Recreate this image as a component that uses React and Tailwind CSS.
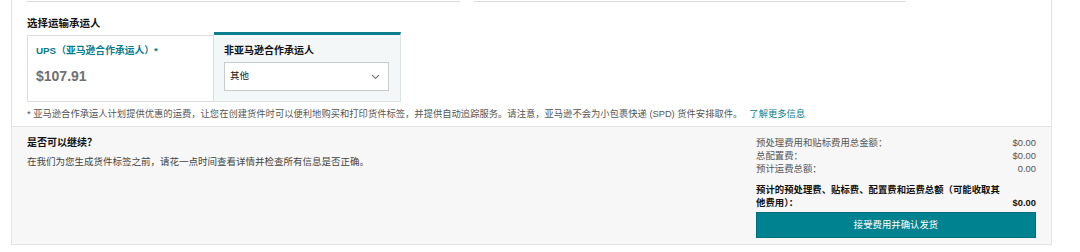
import React from "react";

const font = { fontFamily: '"Liberation Sans", Arial, "Noto Sans CJK SC", sans-serif' };

function Chevron() {
  return (
    <svg width="9" height="6" viewBox="0 0 9 6" fill="none">
      <path d="M1 1l3.5 3.5L8 1" stroke="#7a7a7a" strokeWidth="1.1" />
    </svg>
  );
}

export default function App() {
  const fees = [
    { label: "预处理费用和贴标费用总金额：", value: "$0.00" },
    { label: "总配置费：", value: "$0.00" },
    { label: "预计运费总额：", value: "0.00" },
  ];

  return (
    <div className="w-[1080px] h-[252px] bg-white text-[#333]" style={font}>
      <div className="ml-[11px] w-[1041px] border-x border-b border-[#e3e3e3]">
        <div className="px-[15px]">
          {/* cut-off cards above */}
          <div className="flex gap-[14px]">
            <div className="w-[433px] h-[2px] border-b border-[#dcdcdc]" />
            <div className="w-[432px] h-[2px] border-b border-[#dcdcdc]" />
          </div>

          <h3 className="mt-[14px] text-[10.5px] leading-[14px] font-bold text-[#111]">选择运输承运人</h3>

          {/* Carrier selector */}
          <div className="mt-[2px] flex">
            <div className="mt-[3px] w-[187px] h-[67px] border border-[#dddddd] pl-[8px] pt-[8px]">
              <div className="text-[9.8px] leading-[14px] font-bold text-[#0a7d8c]">UPS（亚马逊合作承运人）*</div>
              <div className="mt-[8px] text-[14px] leading-[20px] font-bold text-[#6f6f6f]">$107.91</div>
            </div>
            <div className="w-[187px] h-[70px] bg-[#f3f7f7] border-t-[3px] border-t-[#0e7f8e] border-r border-b border-r-[#dde3e3] border-b-[#dde3e3] pl-[10px] pt-[9px]">
              <div className="text-[10px] leading-[14px] font-bold text-[#111]">非亚马逊合作承运人</div>
              <div className="mt-[4px] w-[165px] h-[29px] bg-white border border-[#c8cccc] flex items-center justify-between pl-[5px] pr-[8px]">
                <span className="text-[9.5px] text-[#222]">其他</span>
                <Chevron />
              </div>
            </div>
          </div>

          <p className="mt-[6px] pb-[5px] text-[9.3px] leading-[13px] text-[#555] whitespace-nowrap">
            * 亚马逊合作承运人计划提供优惠的运费，让您在创建货件时可以便利地购买和打印货件标签，并提供自动追踪服务。请注意，亚马逊不会为小包裹快递 (SPD) 货件安排取件。
            <span className="ml-[7px] text-[#0a7d8c]">了解更多信息</span>
          </p>
        </div>

        {/* Continue section */}
        <div className="h-[118px] bg-[#f7f7f7] border-t border-[#e3e3e3] flex justify-between pl-[15px] pr-[15px] pt-[9px]">
          <div>
            <h3 className="text-[10px] leading-[13px] font-bold text-[#111]">是否可以继续？</h3>
            <p className="mt-[6px] text-[9.5px] leading-[13px] text-[#444]">在我们为您生成货件标签之前，请花一点时间查看详情并检查所有信息是否正确。</p>
          </div>

          <div className="w-[280px] flex flex-col">
            {fees.map((f) => (
              <div key={f.label} className="flex justify-between text-[9.4px] leading-[13px] text-[#555]">
                <span>{f.label}</span>
                <span>{f.value}</span>
              </div>
            ))}
            <div className="mt-[9px] flex items-end justify-between text-[9.4px] leading-[12.5px] font-bold text-[#111]">
              <span className="max-w-[248px]">预计的预处理费、贴标费、配置费和运费总额（可能收取其他费用）：</span>
              <span>$0.00</span>
            </div>
            <button className="mt-[3px] h-[26px] w-full bg-[#008291] border border-[#00707d] text-white text-[9.4px] flex items-center justify-center">
              接受费用并确认发货
            </button>
          </div>
        </div>
      </div>
    </div>
  );
}
